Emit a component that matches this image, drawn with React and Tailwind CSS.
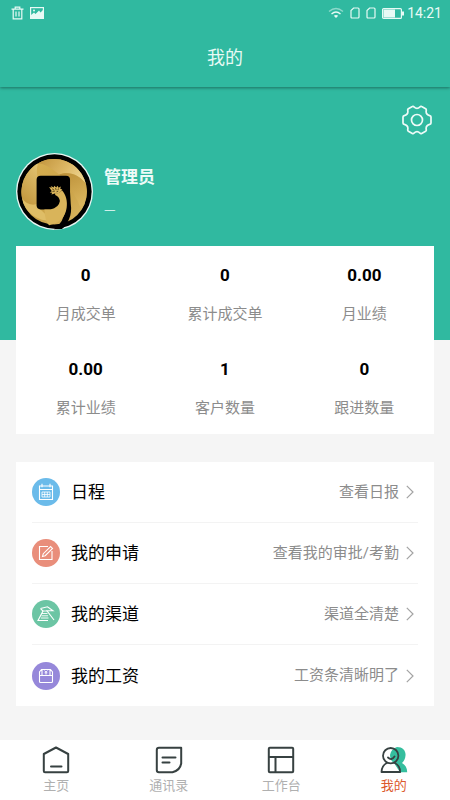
import React, { useState } from 'react';

const stats = [
  { value: '0', label: '月成交单' },
  { value: '0', label: '累计成交单' },
  { value: '0.00', label: '月业绩' },
  { value: '0.00', label: '累计业绩' },
  { value: '1', label: '客户数量' },
  { value: '0', label: '跟进数量' },
];

// --- ICONS ---
const TrashIcon = () => (
  <svg width="13" height="14" viewBox="0 0 13 14" fill="none" stroke="currentColor" strokeWidth="1.2">
    <path d="M0.5 3.2h12M4.2 3V1.2h4.6V3M2.2 3.4v9.4h8.6V3.4M5 5.5v5M8 5.5v5" />
  </svg>
);

const PictureIcon = () => (
  <svg width="14" height="12" viewBox="0 0 14 12">
    <rect x="0.6" y="0.6" width="12.8" height="10.8" fill="none" stroke="currentColor" strokeWidth="1.2" />
    <path d="M1 11V8l3-2.5 1.5 1.5L9 3.5l1.5 2L13 3V11z" fill="currentColor" />
    <circle cx="4" cy="3.4" r="1" fill="currentColor" />
  </svg>
);

const WifiIcon = () => (
  <svg width="16" height="12" viewBox="0 0 16 12" fill="none" stroke="currentColor" strokeWidth="1.4">
    <path d="M1 4.5Q8-1.5 15 4.5" opacity="0.5" />
    <path d="M3.5 7Q8 3 12.5 7" />
    <path d="M5.8 8.8Q8 7 10.2 8.8L8 11z" fill="currentColor" stroke="none" />
  </svg>
);

const SimIcon = () => (
  <svg width="10" height="12" viewBox="0 0 10 12" fill="none" stroke="currentColor" strokeWidth="1.2">
    <path d="M3.6 1H8q1 0 1 1v8q0 1-1 1H2q-1 0-1-1V3.6z" />
  </svg>
);

const BatteryIcon = () => (
  <svg width="22" height="11" viewBox="0 0 22 11">
    <rect x="0.6" y="0.6" width="18.8" height="9.8" rx="1" fill="none" stroke="currentColor" strokeWidth="1.2" />
    <rect x="1.5" y="1.5" width="11.5" height="8" fill="currentColor" />
    <rect x="20" y="3.5" width="2" height="4" fill="currentColor" />
  </svg>
);

const GearIcon = () => (
  <svg width="30" height="30" viewBox="0 0 30 30" fill="none" stroke="currentColor" strokeWidth="1.7" strokeLinejoin="round">
    <path d="M10.3 1.6Q11.3 1 12 1.9Q15 4.8 18 1.9Q18.7 1 19.7 1.6L23.6 3.8Q24.6 4.5 24.2 5.6Q23.6 9.7 27.7 10.6Q29 10.9 29 12V18Q29 19.1 27.7 19.4Q23.6 20.3 24.2 24.4Q24.6 25.5 23.6 26.2L19.7 28.4Q18.7 29 18 28.1Q15 25.2 12 28.1Q11.3 29 10.3 28.4L6.4 26.2Q5.4 25.5 5.8 24.4Q6.4 20.3 2.3 19.4Q1 19.1 1 18V12Q1 10.9 2.3 10.6Q6.4 9.7 5.8 5.6Q5.4 4.5 6.4 3.8Z" />
    <circle cx="15" cy="15" r="5.5" />
  </svg>
);

const Avatar = () => (
  <svg width="77" height="77" viewBox="0 0 228 228" role="img" aria-label="头像">
    <defs>
      <linearGradient id="gold" x1="0" y1="0" x2="1" y2="1">
        <stop offset="0" stopColor="#d9b253" />
        <stop offset="0.6" stopColor="#cba348" />
        <stop offset="1" stopColor="#dcb964" />
      </linearGradient>
      <linearGradient id="petalTop" x1="0" y1="0" x2="1" y2="0.4">
        <stop offset="0" stopColor="#c1943c" />
        <stop offset="0.6" stopColor="#dcb663" />
        <stop offset="1" stopColor="#ebd08a" />
      </linearGradient>
      <linearGradient id="petalLeft" x1="0" y1="1" x2="0.6" y2="0">
        <stop offset="0" stopColor="#c0933a" />
        <stop offset="1" stopColor="#e2c371" />
      </linearGradient>
      <linearGradient id="petalRight" x1="0" y1="0" x2="0.4" y2="1">
        <stop offset="0" stopColor="#bb8f38" />
        <stop offset="1" stopColor="#dab55c" />
      </linearGradient>
    </defs>
    <circle cx="114" cy="114" r="114" fill="#e9f7f3" />
    <circle cx="114" cy="114" r="110" fill="#000" />
    <circle cx="113" cy="115" r="97" fill="url(#gold)" />
    <path d="M65 31Q88 17 114 18C160 19 196 48 207 92C186 62 154 52 128 64Q86 28 65 31Z" fill="url(#petalTop)" />
    <path d="M65 31C56 62 66 96 90 110L61 152Q34 158 18 134C10 94 30 50 65 31Z" fill="url(#petalLeft)" />
    <path d="M128 64C156 52 190 66 207 92Q216 132 194 168Q172 112 128 64Z" fill="url(#petalRight)" />
    <path d="M18 134Q34 158 61 152Q78 184 126 200Q80 206 52 186Q22 166 18 134Z" fill="#dfbd66" />
    <rect x="61" y="67" width="99" height="100" rx="12" fill="#000" />
    <path d="M150 116H160L162 150C168 184 152 212 136 225L112 226Q142 206 146 166Z" fill="#000" />
    <path d="M116 119Q130 120 136 110C148 124 153 142 150 162C146 190 128 208 98 214Q86 204 84 167H102Q127 162 130 142Q128 128 116 124Z" fill="#d9b45a" />
    <path d="M98 101l8 2-3-5 9 4 1-5 6 5 4-5 3 6 7-4-2 7 6 2-6 8q-8 6-16 4l-10 3 2-5-7-1 6-4z" fill="#d9b45a" />
    <path d="M107 106l6 4M117 104l2 6M126 105l-2 5M108 114l7-1M120 115l5-2" stroke="#2a1f08" strokeWidth="2" />
  </svg>
);

const CalendarIcon = () => (
  <svg width="16" height="18" viewBox="0 0 16 18" fill="none" stroke="currentColor" strokeWidth="1.1">
    <path d="M1.5 3H14.5V16.5H1.5zM1.5 6.5h13M4 0.8v3.4M12 0.8v3.4" />
    <path d="M4 9h8v5H4zM4 11.5h8M6.7 9v5M9.3 9v5" strokeWidth="0.8" />
  </svg>
);

const EditIcon = () => (
  <svg width="16" height="16" viewBox="0 0 16 16" fill="none" stroke="currentColor" strokeWidth="1.1">
    <path d="M10 1.5H1.5v13h12.500V6" />
    <path d="M4.5 11.5l0.8-2.8L12.6 1.5l1.900 1.9L7.2 10.7z" />
  </svg>
);

const ChannelIcon = () => (
  <svg width="18" height="16" viewBox="0 0 18 16" fill="none" stroke="currentColor" strokeWidth="1.1">
    <path d="M3.5 2.5L10.5 0.8L16 4.8H10L17 14M3.5 2.5L6 5L1 14.5H11" />
    <path d="M5 5h5M5 7.5h5.5M4.5 9.8H11M4 12h7.5" strokeWidth="0.9" />
  </svg>
);

const SalaryIcon = () => (
  <svg width="16" height="16" viewBox="0 0 16 16" fill="none" stroke="currentColor" strokeWidth="1.1">
    <path d="M3.5 1.5h9L14.5 4v9.5q0 1-1 1h-11q-1 0-1-1V4zM1.5 7.5h13M4 1.5v6M12 1.5v6" />
    <path d="M6.5 2.6L8 4l1.5-1.4M8 4v2.6M6.6 4.8h2.8" strokeWidth="0.9" />
  </svg>
);

const ArrowIcon = () => (
  <svg width="8" height="14" viewBox="0 0 8 14" fill="none" stroke="#a3a3a3" strokeWidth="1.2">
    <path d="M0.8 0.8L7 7L0.8 13.2" />
  </svg>
);

const HomeIcon = () => (
  <svg width="28" height="28" viewBox="0 0 28 28" fill="none" stroke="#374141" strokeWidth="2" strokeLinejoin="round" strokeLinecap="round">
    <path d="M14 1.5L26.2 8V25Q26.2 26.2 25 26.2H3Q1.8 26.2 1.8 25V8Z" />
    <path d="M9 20.5h10.5" />
  </svg>
);

const ContactsIcon = () => (
  <svg width="28" height="28" viewBox="0 0 28 28" fill="none" stroke="#374141" strokeWidth="2" strokeLinejoin="round" strokeLinecap="round">
    <path d="M4 1.8H26.2V17.5Q25 24.5 17.5 26.2H4Q1.8 26.2 1.8 24V4Q1.8 1.8 4 1.8Z" />
    <path d="M7.5 11.5h13M7.5 16.5h7" />
  </svg>
);

const WorkbenchIcon = () => (
  <svg width="28" height="28" viewBox="0 0 28 28" fill="none" stroke="#374141" strokeWidth="2" strokeLinejoin="round">
    <rect x="1.8" y="1.8" width="24.4" height="24.4" rx="1" />
    <path d="M2 11h24M8.5 11v15" />
  </svg>
);

const MineIcon = () => (
  <svg width="28" height="28" viewBox="0 0 28 28" fill="none" stroke="#374141" strokeWidth="1.8" strokeLinejoin="round" strokeLinecap="round">
    <path d="M17 1C23 1 26 5 25.5 9.5C25.3 13 24 15 22 17C25.5 19 27.2 22 27.2 26.2H20L14 17Q10 14 10 9Q11 3 17 1Z" fill="#35be9e" stroke="none" />
    <circle cx="10.7" cy="9.7" r="7.7" />
    <path d="M6.8 17Q1.8 19.5 1.5 26H20.2Q20 19.5 14.8 17M8 11.5Q11.5 15 14.5 10.5" />
  </svg>
);

const menus = [
  { title: '日程', desc: '查看日报', color: 'bg-[#6bbbea]', Icon: CalendarIcon },
  { title: '我的申请', desc: '查看我的审批/考勤', color: 'bg-[#e98e7b]', Icon: EditIcon },
  { title: '我的渠道', desc: '渠道全清楚', color: 'bg-[#6cc5a4]', Icon: ChannelIcon },
  { title: '我的工资', desc: '工资条清晰明了', color: 'bg-[#9688da]', Icon: SalaryIcon },
];

const tabs = [
  { name: '主页', Icon: HomeIcon },
  { name: '通讯录', Icon: ContactsIcon },
  { name: '工作台', Icon: WorkbenchIcon },
  { name: '我的', Icon: MineIcon },
];

const App = () => {
  const [activeTab, setActiveTab] = useState('我的');

  return (
    <div className="min-h-screen flex flex-col bg-[#f5f5f5] font-['Roboto','Noto_Sans_CJK_SC',sans-serif]">
      {/* Header */}
      <header className="relative bg-[#30b9a0] text-[#e8faf5] shadow-[0_1px_3px_rgba(0,0,0,0.4)]">
        <div className="h-[26px] pl-[11px] pr-2 flex items-center justify-between">
          <div className="flex items-center gap-[6px]">
            <TrashIcon />
            <PictureIcon />
          </div>
          <div className="flex items-center gap-[6px]">
            <WifiIcon />
            <SimIcon />
            <SimIcon />
            <BatteryIcon />
            <span className="-ml-[3px] text-sm leading-5">14:21</span>
          </div>
        </div>
        <h1 className="h-[61px] pt-[2px] flex items-center justify-center text-lg">我的</h1>
      </header>

      {/* Profile */}
      <section className="h-[253px] bg-[#30b9a0] px-4 text-[#eefbf8]">
        <div className="flex justify-end pt-[18px] pr-[2px]">
          <button aria-label="设置"><GearIcon /></button>
        </div>
        <div className="mt-[18px] flex items-center gap-[11px]">
          <Avatar />
          <div className="pt-[3px]">
            <p className="text-[17px] leading-6 font-bold">管理员</p>
            <p className="mt-2 font-['Noto_Sans_CJK_SC'] text-[13px] leading-6">—</p>
          </div>
        </div>
      </section>

      <main className="px-4 -mt-[94px]">
        <dl className="grid grid-cols-3 bg-white">
          {stats.map((item) => (
            <div key={item.label} className="h-[94px] pt-[17px] flex flex-col-reverse justify-end gap-[15px] text-center">
              <dt className="text-[15px] leading-6 text-[#8c8c8c]">{item.label}</dt>
              <dd className="text-[17px] leading-6 font-bold text-black">{item.value}</dd>
            </div>
          ))}
        </dl>

        <div className="mt-7 px-4 bg-white divide-y divide-[#f3f3f3]">
          {menus.map(({ title, desc, color, Icon }) => (
            <button key={title} className="w-full h-[61px] pr-1 flex items-center">
              <span className={`w-7 h-7 rounded-full flex items-center justify-center text-white ${color}`}>
                <Icon />
              </span>
              <span className="ml-[11px] pt-[2px] text-[17px] text-black">{title}</span>
              <span className="ml-auto mr-[7px] text-[15px] text-[#8c8c8c]">{desc}</span>
              <ArrowIcon />
            </button>
          ))}
        </div>
      </main>

      {/* Tab bar */}
      <nav className="mt-auto grid grid-cols-4 bg-white">
        {tabs.map(({ name, Icon }) => (
          <button key={name} onClick={() => setActiveTab(name)} className="h-[60px] pt-[6px] flex flex-col items-center">
            <Icon />
            <span className={`mt-[2px] text-[13px] leading-5 ${activeTab === name ? 'text-[#dc5a2c]' : 'text-[#b0b0b0]'}`}>{name}</span>
          </button>
        ))}
      </nav>
    </div>
  );
};

export default App;
